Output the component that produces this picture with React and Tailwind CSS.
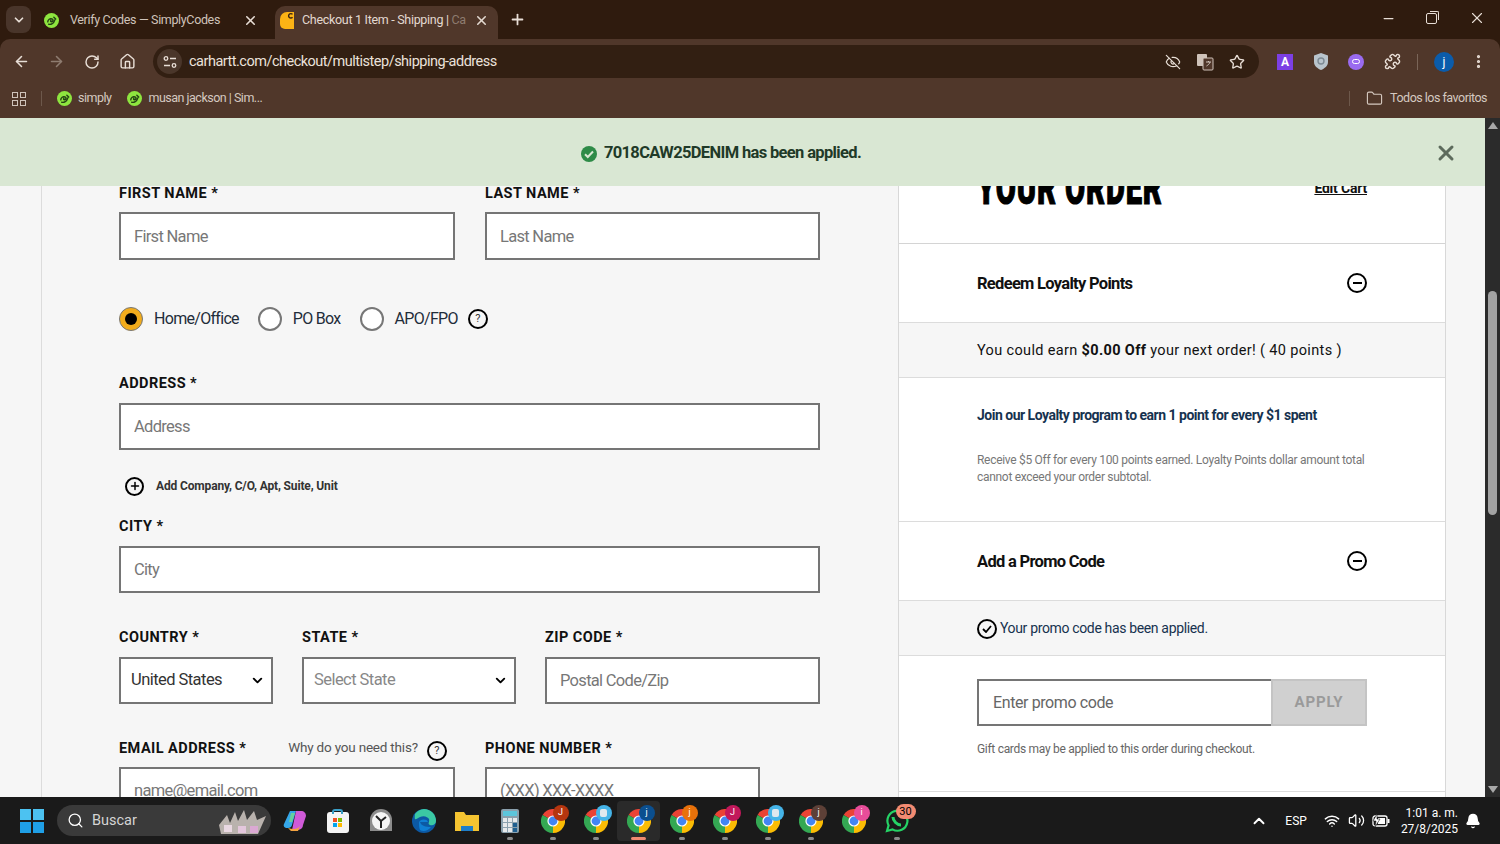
import React from 'react';
import {
  ArrowLeft, ArrowRight, RotateCw, Home, X, Plus, ChevronDown, ChevronUp, Star, Puzzle, MoreVertical,
  Folder, Minus, Search, Wifi, Volume2, Bell, EyeOff,
} from 'lucide-react';

const font = "font-['Roboto','Liberation_Sans',sans-serif]";

function SimplyIcon({ size = 15 }) {
  return (
    <svg width={size} height={size} viewBox="0 0 16 16" className="shrink-0">
      <circle cx="8" cy="8" r="8" fill="#8ee53f" />
      <path d="M4 9.5c0-2.5 2.5-4 4.5-3.2 1.6.6 1.4 2.6-.2 3-1.2.3-1.6-.8-.9-1.5M5 12c2.5.5 5.5-1 6.5-4.5M10.5 4.5l2 2" fill="none" stroke="#234014" strokeWidth="1.5" strokeLinecap="round" />
    </svg>
  );
}

function CarharttIcon() {
  return (
    <svg width="14" height="17" viewBox="0 0 14 17" className="shrink-0">
      <path d="M7 0H14V17H5A5 5 0 0 1 0 12V7A7 7 0 0 1 7 0z" fill="#fbb315" />
      <path d="M7.5 0V6H14V0z" fill="#fbb315" />
      <path d="M12.5 2.4A2.2 2.2 0 1 0 12.5 5.2" fill="none" stroke="#3a2413" strokeWidth="1.4" />
    </svg>
  );
}

function ChromeIcon({ badge, badgeBg, photo }) {
  return (
    <div className="relative w-[24px] h-[24px]">
      <svg width="24" height="24" viewBox="0 0 24 24">
        <path d="M12 12 L1.6 6A12 12 0 0 1 22.4 6z" fill="#ea4335" />
        <path d="M12 12 L22.4 6A12 12 0 0 1 12 24z" fill="#fbbc04" />
        <path d="M12 12 L12 24A12 12 0 0 1 1.6 6z" fill="#34a853" />
        <circle cx="12" cy="12" r="5.6" fill="#fff" />
        <circle cx="12" cy="12" r="4.4" fill="#4285f4" />
      </svg>
      {photo ? (
        <div className="absolute -top-[4px] -right-[4px] w-[16px] h-[16px] rounded-full bg-[#45b4e8] flex items-center justify-center">
          <div className="w-[7px] h-[8px] bg-[#dfe8ee] rounded-[2px]" />
        </div>
      ) : (
        <div className={`absolute -top-[4px] -right-[4px] w-[16px] h-[16px] rounded-full flex items-center justify-center text-[9px] text-white ${badgeBg}`}>{badge}</div>
      )}
    </div>
  );
}

function Slot({ children, dot, active }) {
  return (
    <div className={`relative w-[43px] h-[40px] flex items-center justify-center rounded ${active ? 'bg-[#2a2a2a]' : ''}`}>
      {children}
      {dot && <div className={`absolute bottom-[1px] h-[3px] rounded-full ${active ? 'w-[15px] bg-[#f08a70]' : 'w-[6px] bg-[#8a8a8a]'}`} />}
    </div>
  );
}

function CircleHelp({ className = '' }) {
  return (
    <span className={`shrink-0 inline-flex items-center justify-center w-[20px] h-[20px] rounded-full border-2 border-black text-[11px] text-[#333] ${className}`}>?</span>
  );
}

function TextField({ placeholder, className = '' }) {
  return (
    <input
      readOnly
      placeholder={placeholder}
      className={`h-[47px] bg-white border-2 border-[#757575] px-[13px] text-[16.5px] tracking-[-0.7px] text-[#333] placeholder:text-[#777] outline-none ${className}`}
    />
  );
}

function FieldLabel({ children, className = '' }) {
  return <div className={`h-[24px] leading-[24px] text-[14.5px] font-bold tracking-[0.45px] text-[#111] whitespace-nowrap shrink-0 ${className}`}>{children}</div>;
}

function Radio({ checked, label }) {
  return (
    <div className="flex items-center gap-[11px]">
      {checked ? (
        <span className="w-[24px] h-[24px] rounded-full bg-[#f2ac1c] border border-[#777] flex items-center justify-center">
          <span className="w-[12px] h-[12px] rounded-full bg-black" />
        </span>
      ) : (
        <span className="w-[24px] h-[24px] rounded-full bg-white border-2 border-[#777]" />
      )}
      <span className="text-[16px] tracking-[-0.7px] text-[#1f2d3a]">{label}</span>
    </div>
  );
}

function Accordion({ title }) {
  return (
    <div className="h-[78px] flex items-center justify-between pl-[78px] pr-[78px] bg-white">
      <span className="mt-[2px] text-[16.5px] font-bold text-[#111] tracking-[-0.7px]">{title}</span>
      <span className="w-[20px] h-[20px] rounded-full border-2 border-black flex items-center justify-center">
        <span className="w-[9px] h-[2px] bg-black" />
      </span>
    </div>
  );
}

function BrowserChrome() {
  return (
    <div className="shrink-0 bg-[#2f1b0e] text-[#e8ded6]">
      <div className="h-[39px] flex items-end pl-[6px]">
        <div className="w-[25px] h-[27px] mb-[6px] rounded-[8px] bg-[#49352a] flex items-center justify-center">
          <ChevronDown size={14} strokeWidth={3} />
        </div>
        <div className="w-[231px] h-[33px] pb-[5px] pl-[13px] pr-[3px] flex items-center gap-[11px] text-[12.5px] tracking-[-0.35px] text-[#cfc3ba]">
          <SimplyIcon />
          <span className="flex-1 whitespace-nowrap">Verify Codes — SimplyCodes</span>
          <X size={15} strokeWidth={2.5} className="shrink-0 mr-[1px] text-[#e8ded6]" />
        </div>
        <div className="ml-[13px] w-[223px] h-[33px] pb-[5px] pl-[5px] pr-[9px] flex items-center gap-[8px] text-[12.5px] tracking-[-0.3px] text-[#e3d9d1] bg-[#50372a] rounded-t-[10px]">
          <CarharttIcon />
          <span className="flex-1 whitespace-nowrap">Checkout 1 Item - Shipping | <span className="text-[#8e7c70]">Ca</span></span>
          <X size={15} strokeWidth={2.5} className="shrink-0" />
        </div>
        <Plus size={17} strokeWidth={2.5} className="ml-[11px] mb-[11px]" />
        <div className="flex-1" />
        <div className="flex items-center mb-[12px] pr-[14px]">
          <Minus size={15} />
          <div className="ml-[30px] relative w-[11px] h-[11px] border border-[#e8ded6] rounded-[2px] bg-[#2f1b0e]">
            <div className="absolute -top-[3px] -right-[3px] w-[9px] h-[9px] border-t border-r border-[#e8ded6] rounded-tr-[2px]" />
          </div>
          <X size={18} strokeWidth={1.5} className="ml-[31px]" />
        </div>
      </div>
      <div className="h-[45px] bg-[#50372a] rounded-t-[10px] flex items-center pl-[13px] pr-[13px]">
        <ArrowLeft size={17} strokeWidth={2.2} />
        <ArrowRight size={17} strokeWidth={2.2} className="ml-[18px] text-[#8e7c70]" />
        <RotateCw size={16} strokeWidth={2.2} className="ml-[19px]" />
        <Home size={17} strokeWidth={2} className="ml-[19px]" />
        <div className="ml-[17px] w-[1106px] h-[33px] shrink-0 rounded-full bg-[#321f12] flex items-center pr-[14px]">
          <div className="ml-[4px] w-[25px] h-[25px] rounded-full bg-[#4a362a] flex items-center justify-center">
            <svg width="14" height="14" viewBox="0 0 14 14" fill="none" stroke="#e8ded6" strokeWidth="1.3">
              <circle cx="3" cy="3.5" r="1.8" />
              <path d="M7 3.5h6M1 10.5h6" />
              <circle cx="11" cy="10.5" r="1.8" />
            </svg>
          </div>
          <span className="ml-[7px] text-[14.5px] tracking-[-0.5px] text-[#ebe2db]">carhartt.com/checkout/multistep/shipping-address</span>
          <div className="flex-1" />
          <EyeOff size={16} strokeWidth={1.8} />
          <svg width="18" height="18" viewBox="0 0 18 18" className="ml-[15px]">
            <rect x="1" y="1" width="10" height="12" rx="1" fill="#cfc3ba" />
            <rect x="7" y="5" width="10" height="12" rx="1" fill="#50372a" stroke="#cfc3ba" />
            <path d="M10 9h5M12.5 8v1M14 9c-.5 2-2 3-3.5 4" stroke="#cfc3ba" fill="none" />
          </svg>
          <Star size={16} strokeWidth={2} className="ml-[15px]" />
        </div>
        <div className="ml-[18px] w-[16px] h-[16px] bg-[#7c3fe4] flex items-center justify-center text-[12px] font-bold text-white">A</div>
        <svg width="14" height="17" viewBox="0 0 14 17" className="ml-[21px]">
          <path d="M7 0l7 2.5V9c0 4-3.5 6.5-7 8-3.5-1.5-7-4-7-8V2.5z" fill="#b9c4cc" />
          <circle cx="7" cy="8" r="3" fill="none" stroke="#7d8a94" strokeWidth="1.4" />
        </svg>
        <div className="ml-[20px] w-[16px] h-[16px] rounded-full bg-[#9a6bf0] flex items-center justify-center">
          <div className="w-[8px] h-[5px] rounded-full border border-white" />
        </div>
        <Puzzle size={17} strokeWidth={2} className="ml-[20px]" />
        <div className="ml-[16px] w-px h-[16px] bg-[#7a6558]" />
        <div className="ml-[16px] w-[20px] h-[20px] rounded-full bg-[#0b5cab] flex items-center justify-center text-[12px] text-white">j</div>
        <MoreVertical size={17} strokeWidth={2.5} className="ml-[16px]" />
      </div>
      <div className="h-[34px] pb-[5px] bg-[#50372a] flex items-center pl-[12px] pr-[13px] text-[12.5px] tracking-[-0.5px] text-[#d5c9c0]">
        <div className="grid grid-cols-2 gap-[2px]">
          <span className="w-[6px] h-[6px] border border-[#cfc3ba]" />
          <span className="w-[6px] h-[6px] border border-[#cfc3ba]" />
          <span className="w-[6px] h-[6px] border border-[#cfc3ba]" />
          <span className="w-[6px] h-[6px] border border-[#cfc3ba]" />
        </div>
        <div className="ml-[15px] w-px h-[15px] bg-[#6d584b]" />
        <div className="ml-[15px] flex items-center gap-[6px]"><SimplyIcon />simply</div>
        <div className="ml-[16px] flex items-center gap-[6px]"><SimplyIcon />musan jackson | Sim...</div>
        <div className="flex-1" />
        <div className="w-px h-[15px] bg-[#6d584b] mr-[16px]" />
        <Folder size={17} strokeWidth={1.6} className="mr-[7px]" />
        Todos los favoritos
      </div>
    </div>
  );
}

function ShippingForm() {
  return (
    <div className="w-[857px] ml-[41px] h-full border-l border-[#dcdcdc] pl-[77px] pt-[64px]">
      <div className="flex gap-[30px]">
        <div className="w-[336px]">
          <FieldLabel>FIRST NAME *</FieldLabel>
          <TextField placeholder="First Name" className="w-full h-[48px] mt-[6px]" />
        </div>
        <div className="w-[335px]">
          <FieldLabel>LAST NAME *</FieldLabel>
          <TextField placeholder="Last Name" className="w-full h-[48px] mt-[6px]" />
        </div>
      </div>
      <div className="mt-[46px] h-[26px] flex items-center">
        <Radio checked label="Home/Office" />
        <div className="ml-[19px]"><Radio label="PO Box" /></div>
        <div className="ml-[19px]"><Radio label="APO/FPO" /></div>
        <CircleHelp className="ml-[10px]" />
      </div>
      <FieldLabel className="mt-[40px]">ADDRESS *</FieldLabel>
      <TextField placeholder="Address" className="w-[701px] mt-[7px]" />
      <div className="mt-[26px] h-[20px] flex items-center pl-[6px]">
        <span className="w-[19px] h-[19px] rounded-full border-2 border-black flex items-center justify-center">
          <Plus size={12} strokeWidth={3} className="text-black" />
        </span>
        <span className="ml-[12px] text-[12px] tracking-[-0.15px] font-bold text-[#333]">Add Company, C/O, Apt, Suite, Unit</span>
      </div>
      <FieldLabel className="mt-[19px]">CITY *</FieldLabel>
      <TextField placeholder="City" className="w-[701px] mt-[7px]" />
      <div className="mt-[33px] flex">
        <div className="w-[154px]">
          <FieldLabel>COUNTRY *</FieldLabel>
          <div className="mt-[7px] h-[47px] bg-white border-2 border-[#757575] pl-[10px] pr-[6px] flex items-center justify-between text-[16.5px] tracking-[-0.55px] text-[#333]">
            United States
            <ChevronDown size={15} strokeWidth={3} className="text-black" />
          </div>
        </div>
        <div className="w-[214px] ml-[29px]">
          <FieldLabel>STATE *</FieldLabel>
          <div className="mt-[7px] h-[47px] bg-white border-2 border-[#757575] pl-[10px] pr-[6px] flex items-center justify-between text-[16.5px] tracking-[-0.55px] text-[#888]">
            Select State
            <ChevronDown size={15} strokeWidth={3} className="text-black" />
          </div>
        </div>
        <div className="w-[275px] ml-[29px]">
          <FieldLabel>ZIP CODE *</FieldLabel>
          <TextField placeholder="Postal Code/Zip" className="w-full mt-[7px]" />
        </div>
      </div>
      <div className="mt-[33px] flex gap-[30px]">
        <div className="w-[336px]">
          <div className="h-[24px] flex items-center">
            <FieldLabel>EMAIL ADDRESS *</FieldLabel>
            <span className="ml-[42px] mb-[4px] text-[13.5px] tracking-[-0.2px] whitespace-nowrap text-[#555]">Why do you need this?</span>
            <CircleHelp className="ml-[9px] mt-[4px]" />
          </div>
          <TextField placeholder="name@email.com" className="w-full mt-[6px]" />
        </div>
        <div className="w-[275px]">
          <FieldLabel>PHONE NUMBER *</FieldLabel>
          <TextField placeholder="(XXX) XXX-XXXX" className="w-full mt-[6px]" />
        </div>
      </div>
    </div>
  );
}

function OrderPanel() {
  return (
    <div className="w-[548px] h-full bg-white border-x border-[#d8d8d8] text-[#111]">
      <div className="h-[126px] border-b border-[#d4d4d4] pl-[78px] pr-[78px] flex justify-between">
        <span className="mt-[43px] h-[48px] leading-[48px] text-[43px] font-black tracking-[1.2px] whitespace-nowrap text-black [-webkit-text-stroke:1px_black] scale-x-[0.68] scale-y-[1.1] origin-top-left">YOUR ORDER</span>
        <span className="mt-[60px] text-[14px] tracking-[-0.2px] font-bold underline whitespace-nowrap">Edit Cart</span>
      </div>
      <Accordion title="Redeem Loyalty Points" />
      <div className="h-[56px] pt-[2px] bg-[#f6f6f6] border-y border-[#dcdcdc] pl-[78px] flex items-center text-[14.5px] tracking-[0.35px]">
        <span>You could earn <b>$0.00 Off</b> your next order! ( 40 points )</span>
      </div>
      <div className="h-[144px] pl-[78px] pr-[70px] border-b border-[#dcdcdc]">
        <div className="pt-[27px] text-[14px] font-bold text-[#16324f] tracking-[-0.5px]">Join our Loyalty program to earn 1 point for every $1 spent</div>
        <div className="mt-[26px] text-[12px] tracking-[-0.3px] leading-[17px] text-[#777]">Receive $5 Off for every 100 points earned. Loyalty Points dollar amount total cannot exceed your order subtotal.</div>
      </div>
      <Accordion title="Add a Promo Code" />
      <div className="h-[56px] pt-[1px] bg-[#f6f6f6] border-y border-[#dcdcdc] pl-[78px] flex items-center gap-[3px] text-[14px] tracking-[-0.35px] text-[#16324f]">
        <span className="w-[20px] h-[20px] rounded-full border-2 border-black flex items-center justify-center">
          <svg width="10" height="8" viewBox="0 0 10 8" fill="none" stroke="black" strokeWidth="1.8"><path d="M1 4l3 3 5-6" /></svg>
        </span>
        Your promo code has been applied.
      </div>
      <div className="h-[136px] pl-[78px] pr-[78px] pt-[23px] border-b border-[#dcdcdc]">
        <div className="flex h-[47px]">
          <input readOnly placeholder="Enter promo code" className="w-[294px] border-2 border-r-0 border-[#757575] pl-[14px] text-[16px] tracking-[-0.4px] placeholder:text-[#666] outline-none" />
          <div className="flex-1 bg-[#d0d0d0] border-2 border-[#c4c4c4] flex items-center justify-center text-[15px] font-bold tracking-[0.8px] text-[#9a9a9a]">APPLY</div>
        </div>
        <div className="mt-[14px] text-[12px] tracking-[-0.3px] text-[#666]">Gift cards may be applied to this order during checkout.</div>
      </div>
    </div>
  );
}

function Scrollbar() {
  return (
    <div className="w-[15px] h-full shrink-0 bg-[#2b2b2b] flex flex-col items-center">
      <div className="mt-[4px] w-0 h-0 border-x-[5px] border-x-transparent border-b-[7px] border-b-[#a8a8a8]" />
      <div className="mt-[162px] w-[9px] h-[224px] rounded-full bg-[#a3a3a3]" />
      <div className="flex-1" />
      <div className="mb-[4px] w-0 h-0 border-x-[5px] border-x-transparent border-t-[7px] border-t-[#a8a8a8]" />
    </div>
  );
}

function Taskbar() {
  return (
    <div className="h-[47px] shrink-0 bg-[#1a1a1a] flex items-center text-white">
      <div className="ml-[20px] grid grid-cols-2 gap-[2px]">
        <span className="w-[11px] h-[11px] bg-[#4cc2f1]" />
        <span className="w-[11px] h-[11px] bg-[#4cc2f1]" />
        <span className="w-[11px] h-[11px] bg-[#1f9fe6]" />
        <span className="w-[11px] h-[11px] bg-[#1f9fe6]" />
      </div>
      <div className="ml-[13px] w-[214px] h-[31px] rounded-full bg-[#3a3a3a] flex items-center pl-[10px] text-[14.5px] text-[#d4d4d4]">
        <Search size={17} strokeWidth={1.8} className="text-white" />
        <span className="ml-[8px]">Buscar</span>
        <svg width="50" height="26" viewBox="0 0 50 26" className="ml-auto mr-[3px]">
          <path d="M1 17l8-10 3 8 5-11 3 9 6-11 3 10 7-9 3 9 9-4-8 18H3z" fill="#b9b2ad" />
          <rect x="6" y="17" width="8" height="7" fill="#e9d8e2" />
          <rect x="20" y="18" width="8" height="7" fill="#e3c7dc" />
          <rect x="32" y="18" width="8" height="7" fill="#dba9d3" />
        </svg>
      </div>
      <div className="ml-[2px] flex items-center">
        <Slot>
          <svg width="24" height="22" viewBox="0 0 24 22">
            <path d="M7 1h6L9 15a4 4 0 0 1-4 3H3a3 3 0 0 1-2-4z" fill="#35a7e8" />
            <path d="M13 1h5c3 0 5 2 5 5l-3 9a5 5 0 0 1-5 5H9z" fill="#d05ad8" />
            <path d="M5 18c6 2 10 1 12-2l-2 5H8z" fill="#f4a340" />
            <path d="M8 3h4L9 12H6z" fill="#67d19c" />
          </svg>
        </Slot>
        <Slot>
          <div className="relative w-[22px] h-[21px] mt-[3px] bg-[#f4f4f4] rounded-[3px] flex items-center justify-center">
            <div className="absolute -top-[3px] w-[11px] h-[5px] border-2 border-b-0 border-[#3aa0c8] rounded-t-[3px]" />
            <div className="grid grid-cols-2 gap-[1px]">
              <span className="w-[4px] h-[4px] bg-[#f25022]" />
              <span className="w-[4px] h-[4px] bg-[#7fba00]" />
              <span className="w-[4px] h-[4px] bg-[#00a4ef]" />
              <span className="w-[4px] h-[4px] bg-[#ffb900]" />
            </div>
          </div>
        </Slot>
        <Slot>
          <svg width="24" height="24" viewBox="0 0 24 24">
            <path d="M1 22V11a11 11 0 0 1 22 0v11z" fill="#8c8c8c" />
            <circle cx="12" cy="12" r="9" fill="#f5f5f5" />
            <path d="M12 12L7 7M12 12l5-4M12 12v7" stroke="#222" strokeWidth="2" />
          </svg>
        </Slot>
        <Slot>
          <svg width="24" height="24" viewBox="0 0 24 24">
            <circle cx="12" cy="12" r="12" fill="#0c59a4" />
            <path d="M12 0a12 12 0 0 1 12 12c0 3-3 5-6 4-3-1 0-3-1-6-1-2-5-4-9-2C4 10 2 13 3 5a12 12 0 0 1 9-5z" fill="#3bc9a3" />
            <path d="M7 14c0-4 8-5 9-1H8c1 4 6 5 11 5-3 4-8 5-11 3-1-2-1-5-1-7z" fill="#0f7fd4" />
          </svg>
        </Slot>
        <Slot>
          <svg width="24" height="20" viewBox="0 0 24 20">
            <path d="M0 1h9l2 3h13v16H0z" fill="#f5c431" />
            <rect x="6" y="15" width="12" height="5" fill="#1f7ec8" />
          </svg>
        </Slot>
        <Slot dot>
          <div className="w-[18px] h-[24px] rounded-[2px] bg-[#8aa0ad] p-[2px]">
            <div className="h-[5px] bg-[#5cc6dc]" />
            <div className="mt-[2px] grid grid-cols-3 gap-[1px]">
              {Array.from({ length: 9 }).map((_, i) => (
                <span key={i} className={`h-[4px] ${i % 3 === 2 && i > 2 ? 'bg-[#1f5f8f]' : 'bg-[#e6e9eb]'}`} />
              ))}
            </div>
          </div>
        </Slot>
        <Slot dot><ChromeIcon badge="J" badgeBg="bg-[#b5350f]" /></Slot>
        <Slot dot><ChromeIcon photo /></Slot>
        <Slot dot active><ChromeIcon badge="j" badgeBg="bg-[#0b4f8f]" /></Slot>
        <Slot dot><ChromeIcon badge="j" badgeBg="bg-[#e8710a]" /></Slot>
        <Slot dot><ChromeIcon badge="J" badgeBg="bg-[#c2185b]" /></Slot>
        <Slot dot><ChromeIcon photo /></Slot>
        <Slot dot><ChromeIcon badge="j" badgeBg="bg-[#5d4037]" /></Slot>
        <Slot><ChromeIcon badge="i" badgeBg="bg-[#e84d9a]" /></Slot>
        <Slot dot>
          <div className="relative">
            <svg width="24" height="24" viewBox="0 0 24 24" fill="none" stroke="#25d366" strokeWidth="2.2">
              <path d="M2 22l1.6-5.6A10 10 0 1 1 7.5 20.4z" />
              <path d="M8 8c0 4 4 8 8 8" strokeWidth="3" />
            </svg>
            <span className="absolute -top-[5px] left-[11px] w-[20px] h-[15px] rounded-full bg-[#f28b72] text-[11px] leading-[15px] text-center text-black">30</span>
          </div>
        </Slot>
      </div>
      <div className="flex-1" />
      <ChevronUp size={18} strokeWidth={2.5} className="mr-[17px]" />
      <span className="text-[12px] mr-[17px]">ESP</span>
      <Wifi size={16} strokeWidth={2.2} className="mr-[8px]" />
      <Volume2 size={17} strokeWidth={1.8} className="mr-[7px]" />
      <svg width="18" height="14" viewBox="0 0 18 14" className="mr-[11px]">
        <rect x="1" y="2" width="14" height="10" rx="2" fill="none" stroke="white" strokeWidth="1.3" />
        <rect x="6" y="4" width="7" height="6" fill="white" />
        <rect x="15.5" y="5" width="2" height="4" fill="white" />
        <path d="M5 0L1 7h3l-1 6 5-8H5z" fill="white" stroke="#1a1a1a" strokeWidth="0.6" />
      </svg>
      <div className="text-right text-[12px] leading-[16px] mr-[7px]">
        <div>1:01 a. m.</div>
        <div>27/8/2025</div>
      </div>
      <Bell size={16} fill="white" className="mr-[19px]" />
    </div>
  );
}

export default function App() {
  return (
    <div className={`h-[844px] w-[1500px] flex flex-col overflow-hidden ${font}`}>
      <BrowserChrome />
      <div className="relative flex-1 min-h-0 flex bg-[#f6f6f6] overflow-hidden">
        <div className="flex-1 min-w-0 flex">
          <ShippingForm />
          <OrderPanel />
        </div>
        <Scrollbar />
        <div className="absolute top-0 left-0 right-[15px] h-[68px] bg-[#d9e7d3] flex items-center justify-center">
          <div className="ml-[-43px] pt-[3px] flex items-center gap-[7px] text-[16.5px] font-bold text-[#1f3a28] tracking-[-0.65px]">
            <svg width="16" height="16" viewBox="0 0 16 16">
              <circle cx="8" cy="8" r="8" fill="#2e8b47" />
              <path d="M4 8.2l2.8 2.8L12 5.5" fill="none" stroke="#d9e7d3" strokeWidth="2" />
            </svg>
            7018CAW25DENIM has been applied.
          </div>
          <X size={24} strokeWidth={3} className="absolute right-[27px] top-[23px] text-[#5d6b5c]" />
        </div>
      </div>
      <Taskbar />
    </div>
  );
}
